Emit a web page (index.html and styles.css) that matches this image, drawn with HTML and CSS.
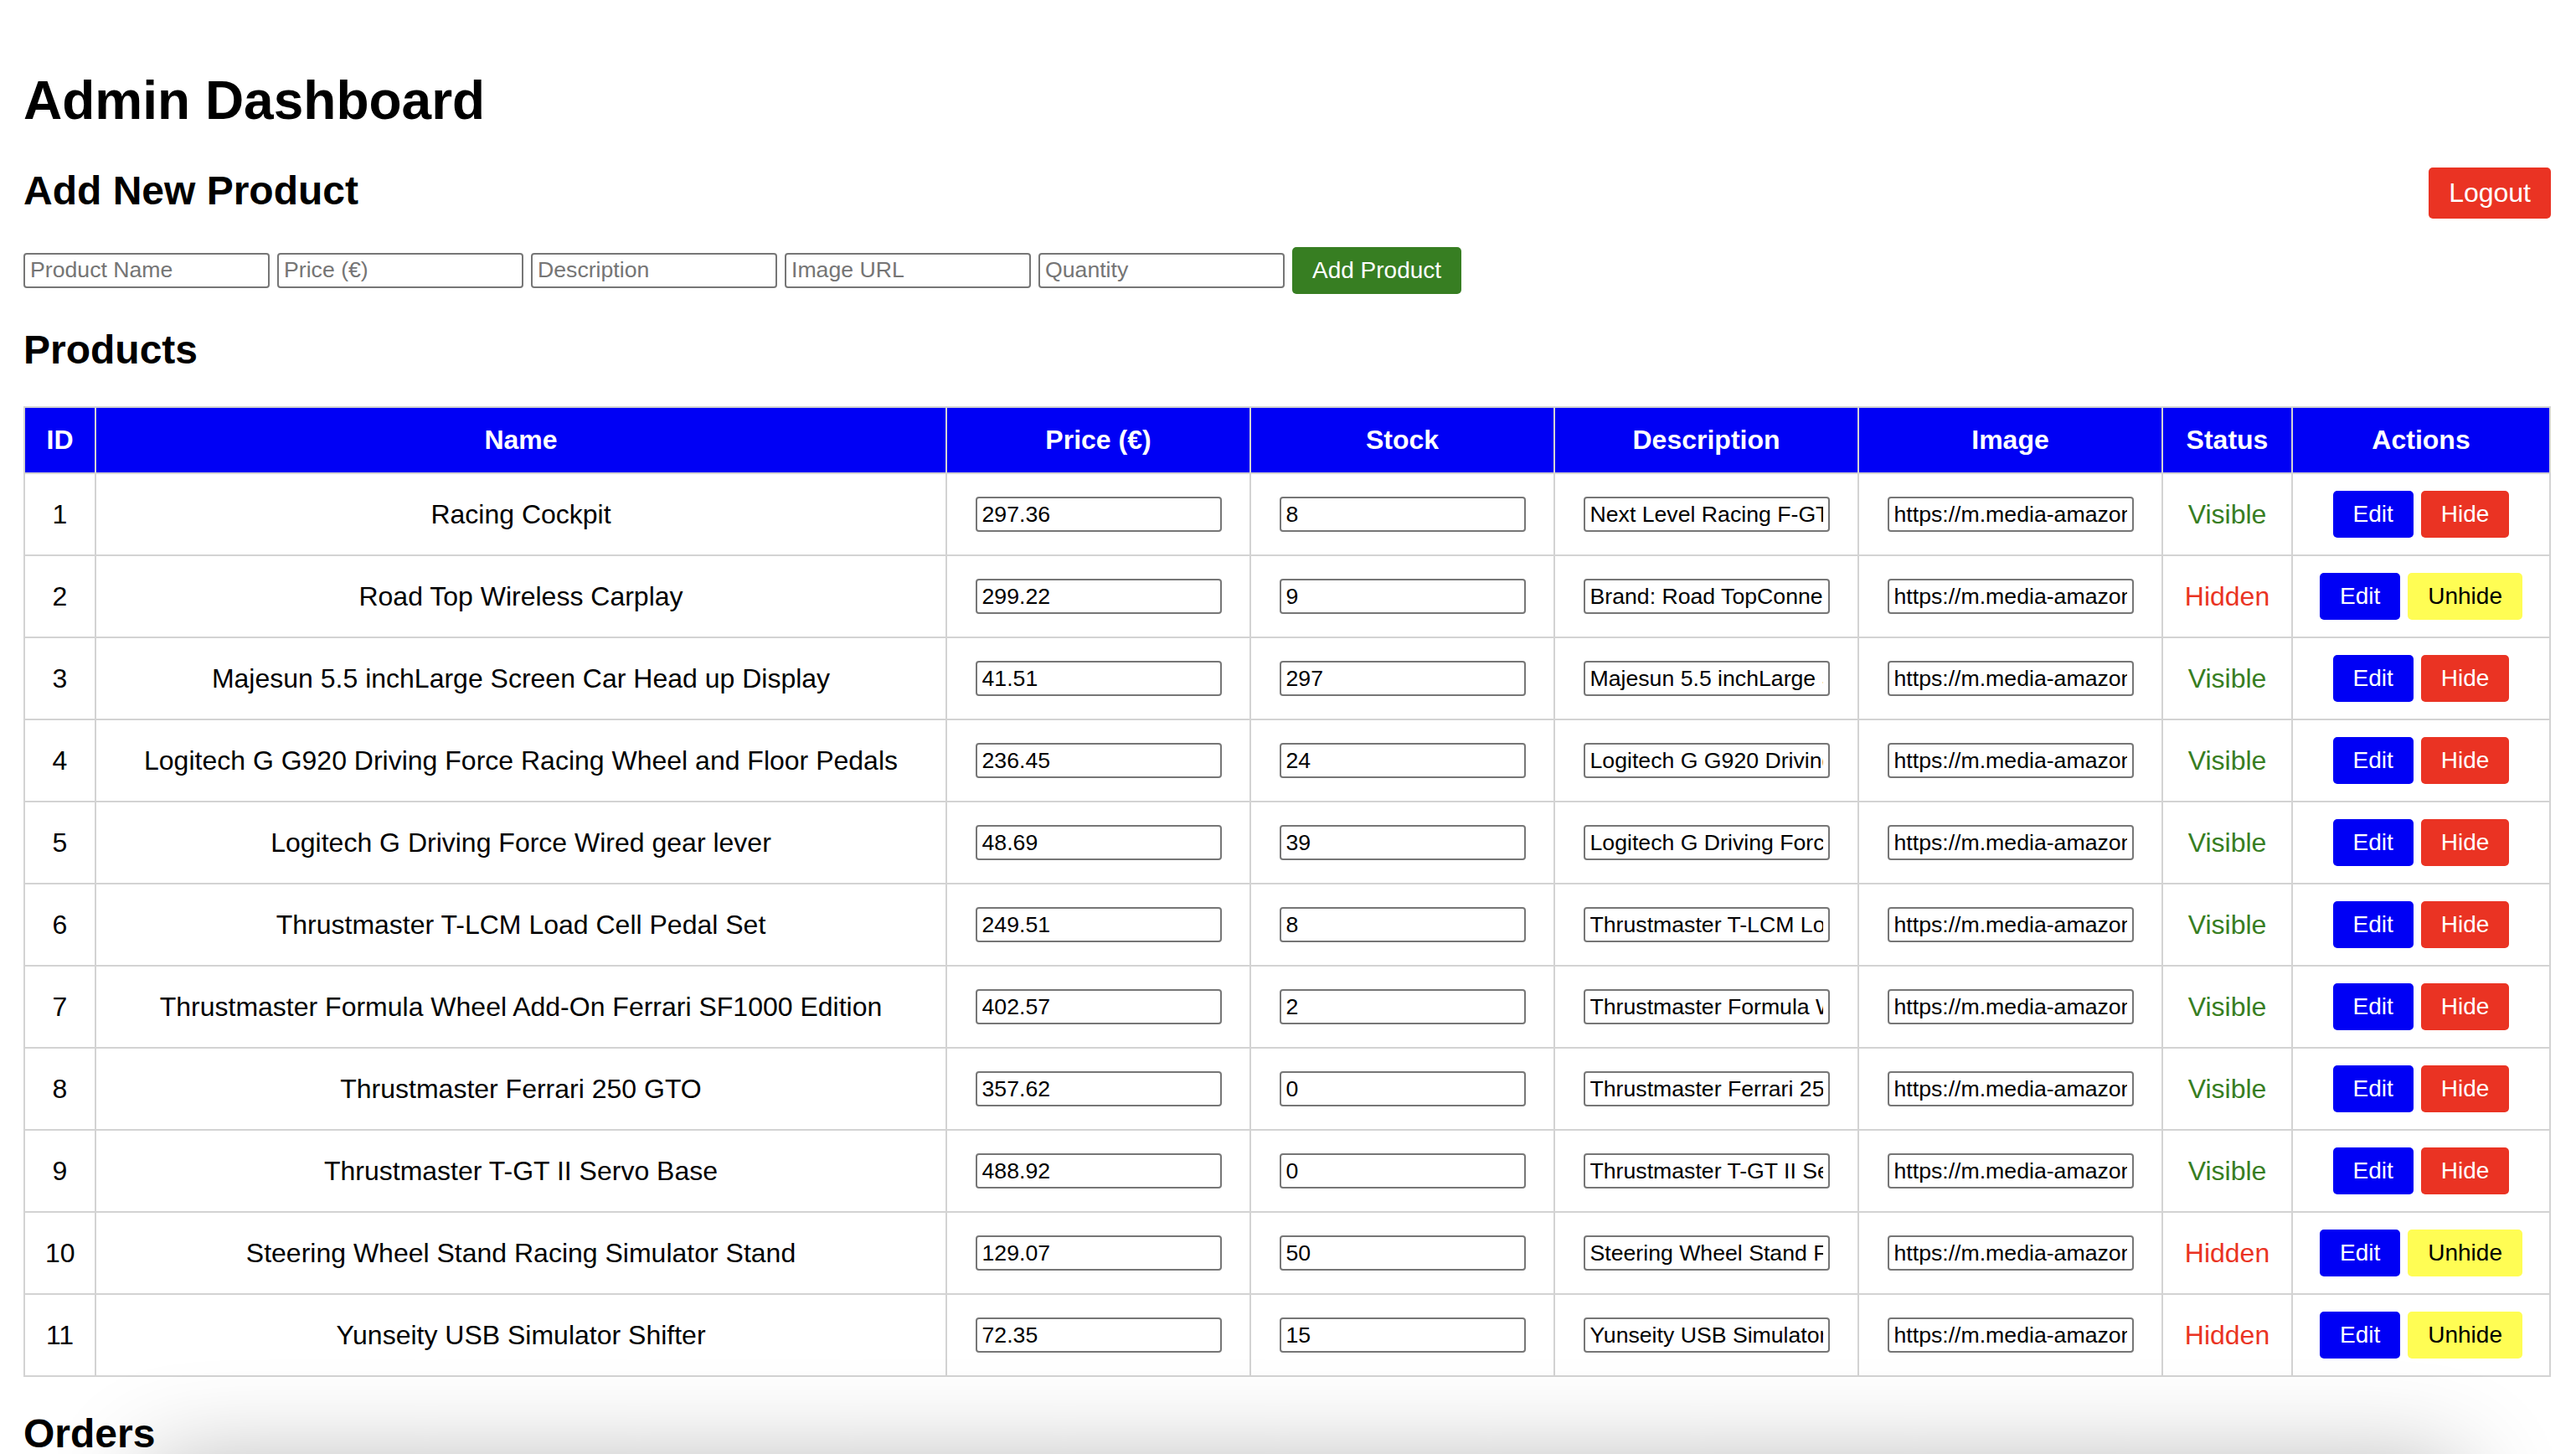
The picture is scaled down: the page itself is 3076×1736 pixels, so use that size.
FILE: index.html
```html
<!DOCTYPE html>
<html lang="en">
<head>
<meta charset="utf-8">
<title>Admin Dashboard</title>
<link rel="stylesheet" href="styles.css">
</head>
<body>
<h1 class="page-title">Admin Dashboard</h1>
<div class="title-row">
  <h2 class="section-title">Add New Product</h2>
  <button class="btn btn-red btn-lg">Logout</button>
</div>
<div class="add-form">
  <input class="field" type="text" placeholder="Product Name">
  <input class="field" type="text" placeholder="Price (€)">
  <input class="field" type="text" placeholder="Description">
  <input class="field" type="text" placeholder="Image URL">
  <input class="field" type="text" placeholder="Quantity">
  <button class="btn btn-green">Add Product</button>
</div>
<h2 class="section-title products-title">Products</h2>
<table class="products">
  <colgroup>
    <col class="c-id"><col class="c-name"><col class="c-mid"><col class="c-mid"><col class="c-mid"><col class="c-mid"><col class="c-status"><col class="c-actions">
  </colgroup>
  <thead>
    <tr><th>ID</th><th>Name</th><th>Price (€)</th><th>Stock</th><th>Description</th><th>Image</th><th>Status</th><th>Actions</th></tr>
  </thead>
  <tbody>
    <tr><td>1</td><td>Racing Cockpit</td><td><input class="field" value="297.36"></td><td><input class="field" value="8"></td><td><input class="field" value="Next Level Racing F-GT Simulator Cockpit"></td><td><input class="field" value="https://m.media-amazon.com/images/I/71racing.jpg"></td><td class="st-visible">Visible</td><td><div class="actions"><button class="btn btn-blue">Edit</button><button class="btn btn-red">Hide</button></div></td></tr>
    <tr><td>2</td><td>Road Top Wireless Carplay</td><td><input class="field" value="299.22"></td><td><input class="field" value="9"></td><td><input class="field" value="Brand: Road TopConnectivity Technology: Wireless"></td><td><input class="field" value="https://m.media-amazon.com/images/I/71roadtop.jpg"></td><td class="st-hidden">Hidden</td><td><div class="actions"><button class="btn btn-blue">Edit</button><button class="btn btn-yellow">Unhide</button></div></td></tr>
    <tr><td>3</td><td>Majesun 5.5 inchLarge Screen Car Head up Display</td><td><input class="field" value="41.51"></td><td><input class="field" value="297"></td><td><input class="field" value="Majesun 5.5 inchLarge Screen Car Head up Display"></td><td><input class="field" value="https://m.media-amazon.com/images/I/71majesun.jpg"></td><td class="st-visible">Visible</td><td><div class="actions"><button class="btn btn-blue">Edit</button><button class="btn btn-red">Hide</button></div></td></tr>
    <tr><td>4</td><td>Logitech G G920 Driving Force Racing Wheel and Floor Pedals</td><td><input class="field" value="236.45"></td><td><input class="field" value="24"></td><td><input class="field" value="Logitech G G920 Driving Force Racing Wheel"></td><td><input class="field" value="https://m.media-amazon.com/images/I/71g920.jpg"></td><td class="st-visible">Visible</td><td><div class="actions"><button class="btn btn-blue">Edit</button><button class="btn btn-red">Hide</button></div></td></tr>
    <tr><td>5</td><td>Logitech G Driving Force Wired gear lever</td><td><input class="field" value="48.69"></td><td><input class="field" value="39"></td><td><input class="field" value="Logitech G Driving Force Shifter"></td><td><input class="field" value="https://m.media-amazon.com/images/I/71shifter.jpg"></td><td class="st-visible">Visible</td><td><div class="actions"><button class="btn btn-blue">Edit</button><button class="btn btn-red">Hide</button></div></td></tr>
    <tr><td>6</td><td>Thrustmaster T-LCM Load Cell Pedal Set</td><td><input class="field" value="249.51"></td><td><input class="field" value="8"></td><td><input class="field" value="Thrustmaster T-LCM Load Cell Pedals"></td><td><input class="field" value="https://m.media-amazon.com/images/I/71tlcm.jpg"></td><td class="st-visible">Visible</td><td><div class="actions"><button class="btn btn-blue">Edit</button><button class="btn btn-red">Hide</button></div></td></tr>
    <tr><td>7</td><td>Thrustmaster Formula Wheel Add-On Ferrari SF1000 Edition</td><td><input class="field" value="402.57"></td><td><input class="field" value="2"></td><td><input class="field" value="Thrustmaster Formula Wheel Add-On Ferrari"></td><td><input class="field" value="https://m.media-amazon.com/images/I/71sf1000.jpg"></td><td class="st-visible">Visible</td><td><div class="actions"><button class="btn btn-blue">Edit</button><button class="btn btn-red">Hide</button></div></td></tr>
    <tr><td>8</td><td>Thrustmaster Ferrari 250 GTO</td><td><input class="field" value="357.62"></td><td><input class="field" value="0"></td><td><input class="field" value="Thrustmaster Ferrari 250 GTO Wheel Add-On"></td><td><input class="field" value="https://m.media-amazon.com/images/I/71gto.jpg"></td><td class="st-visible">Visible</td><td><div class="actions"><button class="btn btn-blue">Edit</button><button class="btn btn-red">Hide</button></div></td></tr>
    <tr><td>9</td><td>Thrustmaster T-GT II Servo Base</td><td><input class="field" value="488.92"></td><td><input class="field" value="0"></td><td><input class="field" value="Thrustmaster T-GT II Servo Base"></td><td><input class="field" value="https://m.media-amazon.com/images/I/71tgt.jpg"></td><td class="st-visible">Visible</td><td><div class="actions"><button class="btn btn-blue">Edit</button><button class="btn btn-red">Hide</button></div></td></tr>
    <tr><td>10</td><td>Steering Wheel Stand Racing Simulator Stand</td><td><input class="field" value="129.07"></td><td><input class="field" value="50"></td><td><input class="field" value="Steering Wheel Stand Foldable Racing Simulator"></td><td><input class="field" value="https://m.media-amazon.com/images/I/71stand.jpg"></td><td class="st-hidden">Hidden</td><td><div class="actions"><button class="btn btn-blue">Edit</button><button class="btn btn-yellow">Unhide</button></div></td></tr>
    <tr><td>11</td><td>Yunseity USB Simulator Shifter</td><td><input class="field" value="72.35"></td><td><input class="field" value="15"></td><td><input class="field" value="Yunseity USB Simulator Shifter"></td><td><input class="field" value="https://m.media-amazon.com/images/I/71yunseity.jpg"></td><td class="st-hidden">Hidden</td><td><div class="actions"><button class="btn btn-blue">Edit</button><button class="btn btn-yellow">Unhide</button></div></td></tr>
  </tbody>
</table>
<h2 class="section-title orders-title">Orders</h2>
<div class="orders-panel"></div>
</body>
</html>
```
FILE: styles.css
```css
html, body {
  background: #ffffff;
}
body {
  margin: 0;
  padding: 40px 30px 0 28px;
  font-family: "Liberation Sans", Arial, Helvetica, sans-serif;
  color: #000000;
}
.page-title {
  font-size: 64px;
  font-weight: bold;
  margin: 42.88px 0;
}
.title-row {
  display: flex;
  justify-content: space-between;
  align-items: flex-start;
  height: 55px;
  margin: 39.84px 0;
}
.section-title {
  font-size: 48px;
  font-weight: bold;
  margin: 0;
}
.add-form {
  display: flex;
  align-items: center;
  gap: 9px;
}
.field {
  width: 294px;
  height: 42px;
  box-sizing: border-box;
  border: 2px solid #767676;
  border-radius: 4px;
  padding: 0 6px;
  font-family: "Liberation Sans", Arial, Helvetica, sans-serif;
  font-size: 26.67px;
  color: #000000;
  background: #ffffff;
  outline: none;
}
.field::placeholder {
  color: #757575;
}
.btn {
  border: none;
  border-radius: 5px;
  padding: 12px 24px;
  font-family: "Liberation Sans", Arial, Helvetica, sans-serif;
  font-size: 28px;
  line-height: normal;
  color: #ffffff;
  cursor: pointer;
}
.btn-lg {
  font-size: 32px;
}
.btn-red {
  background: #ea3323;
}
.btn-green {
  background: #377e22;
}
.btn-blue {
  background: #0000f5;
}
.btn-yellow {
  background: #fffd54;
  color: #000000;
}
.products-title {
  margin: 39.84px 0;
}
.products {
  width: 100%;
  border-collapse: collapse;
  table-layout: fixed;
}
.c-id { width: 85px; }
.c-mid { width: 363px; }
.c-status { width: 155px; }
.c-actions { width: 308px; }
.products th,
.products td {
  border: 2px solid #d3d3d3;
  padding: 20px 24px;
  text-align: center;
  vertical-align: middle;
  font-size: 32px;
}
.products th {
  background: #0000f5;
  color: #ffffff;
  font-weight: bold;
}
.products td .field {
  display: block;
  margin: 0 auto;
}
.actions {
  display: flex;
  justify-content: center;
  gap: 9px;
}
.st-visible {
  color: #377e22;
}
.st-hidden {
  color: #ea3323;
}
.orders-title {
  margin: 39.84px 0 0;
}
.orders-panel {
  margin: 10px 108px 0 150px;
  height: 300px;
  background: #ffffff;
  box-shadow: 0 0 120px rgba(0, 0, 0, 0.3);
}
```
